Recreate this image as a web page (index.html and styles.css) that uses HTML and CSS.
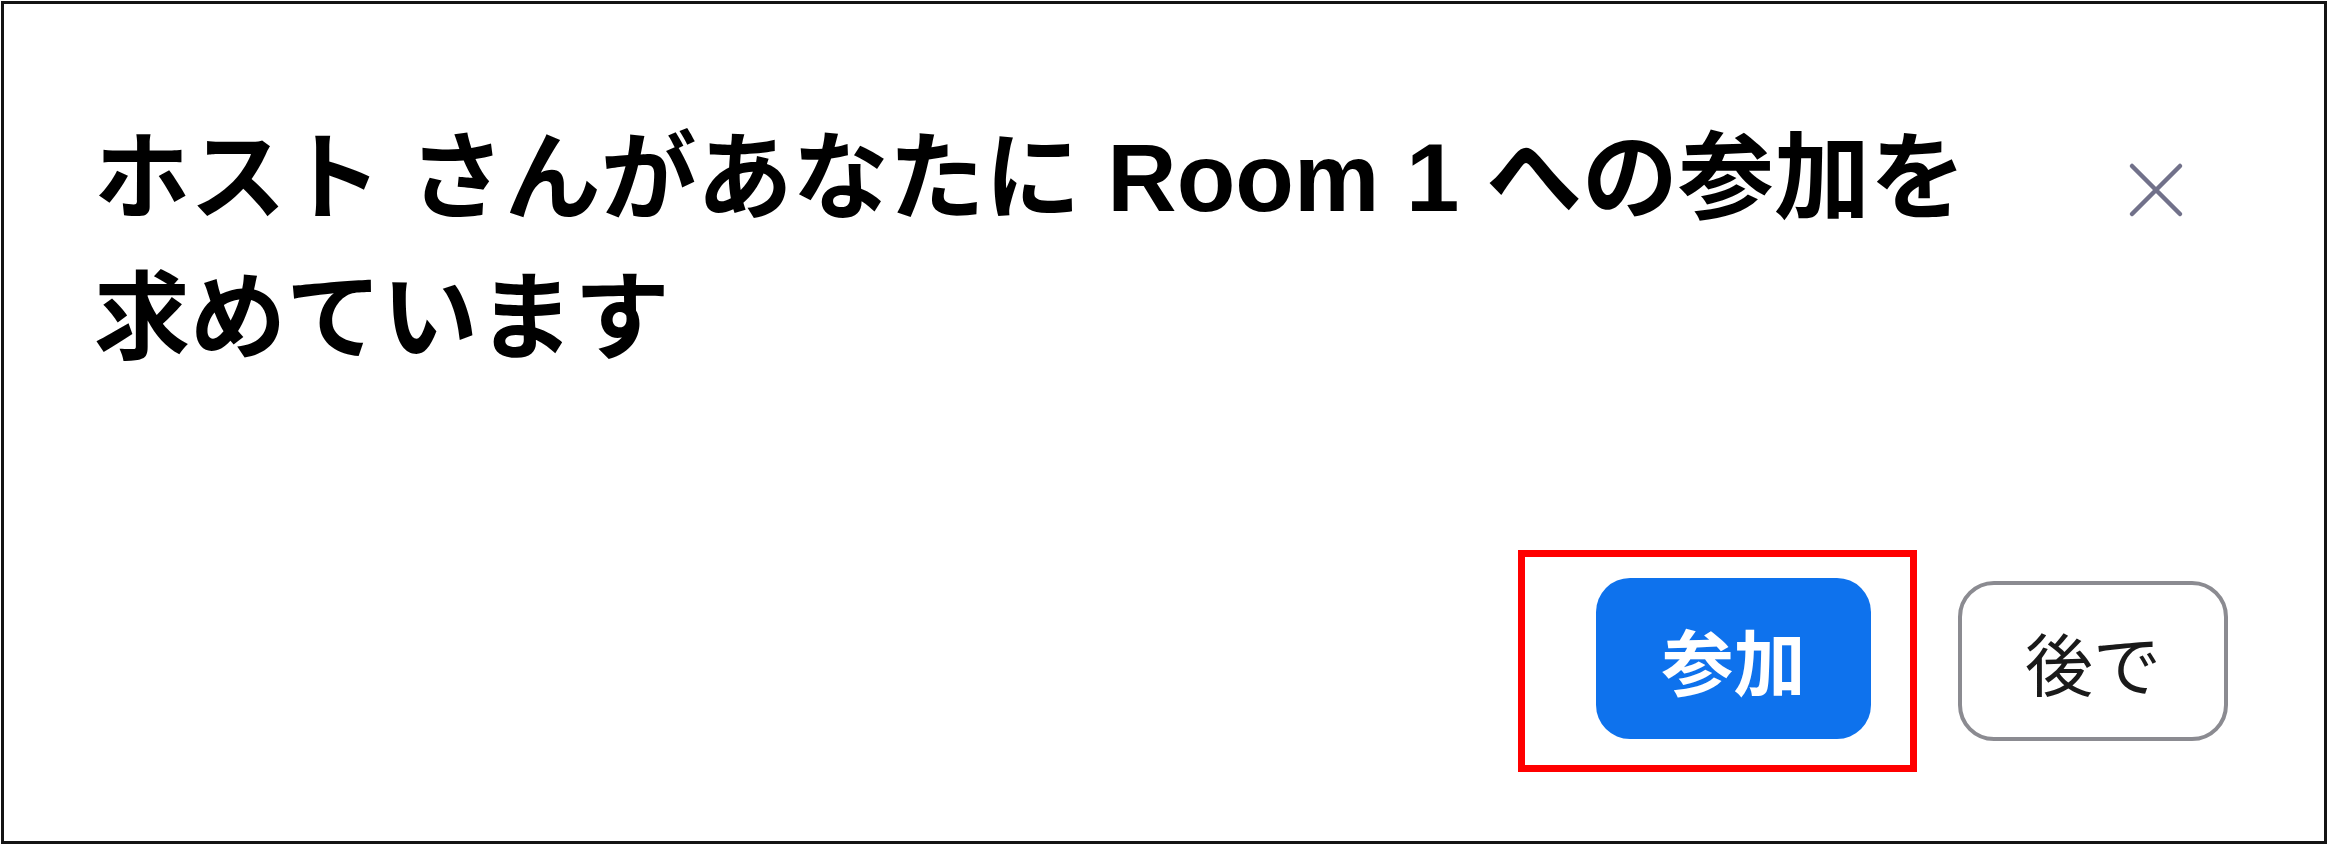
FILE: index.html
```html
<!DOCTYPE html>
<html lang="ja">
  <head>
    <meta charset="UTF-8" />
    <meta name="viewport" content="width=device-width, initial-scale=1.0" />
    <title>ブレイクアウトルームへの招待</title>
    <link rel="stylesheet" href="styles.css">
  </head>

  <body>
    <div class="frame">
      <div class="dialog">
        <div class="dialog-header">
          <h1 class="dialog-title">ホスト さんがあなたに Room 1 への参加を求めています</h1>
          <button class="close-btn" type="button" aria-label="閉じる">
            <svg width="56" height="56" viewBox="0 0 56 56">
              <path d="M4 4 L52 52 M52 4 L4 52" />
            </svg>
          </button>
        </div>

        <div class="dialog-actions">
          <div class="highlight">
            <button class="btn btn-primary" type="button">参加</button>
          </div>
          <button class="btn btn-secondary" type="button">後で</button>
        </div>
      </div>
    </div>
  </body>
</html>
```

FILE: styles.css
```css
body {
  margin: 0;
  padding: 1px 0 0 1px;
  background-color: #ffffff;
  font-family: "Liberation Sans", "Noto Sans CJK JP", sans-serif;
}

.frame {
  box-sizing: border-box;
  width: 2326px;
  height: 843px;
  border: 3px solid #141414;
  background-color: #ffffff;
}

.dialog {
  display: flex;
  flex-direction: column;
  height: 100%;
  padding: 0 96px 69px 90px;
  box-sizing: border-box;
}

.dialog-header {
  display: flex;
  justify-content: space-between;
  align-items: flex-start;
  padding-top: 104px;
}

.dialog-title {
  margin: 0;
  max-width: 1920px;
  font-size: 96px;
  font-weight: bold;
  line-height: 140px;
  color: #000000;
}

.close-btn {
  background: none;
  border: none;
  padding: 0;
  margin: 54px 44px 0 0;
  width: 56px;
  height: 56px;
  cursor: pointer;
}

.close-btn svg {
  display: block;
}

.close-btn path {
  stroke: #71718a;
  stroke-width: 4.5;
  stroke-linecap: round;
  fill: none;
}

/* Buttons */
.dialog-actions {
  margin-top: auto;
  display: flex;
  justify-content: flex-end;
  align-items: center;
  gap: 41px;
}

.highlight {
  border: 7px solid #ff0000;
  padding: 21px 39px 26px 71px;
}

.btn {
  font-family: "Noto Sans CJK JP", sans-serif;
  border-radius: 34px;
  cursor: pointer;
  display: flex;
  align-items: center;
  justify-content: center;
}

.btn-primary {
  width: 275px;
  height: 161px;
  background-color: #0e72ed;
  color: #ffffff;
  border: none;
  font-size: 72px;
  font-weight: bold;
}

.btn-secondary {
  width: 270px;
  height: 160px;
  background-color: #ffffff;
  color: #1a1a1a;
  border: 4px solid #8b8b91;
  border-radius: 36px;
  font-size: 68px;
  font-weight: normal;
}
```
